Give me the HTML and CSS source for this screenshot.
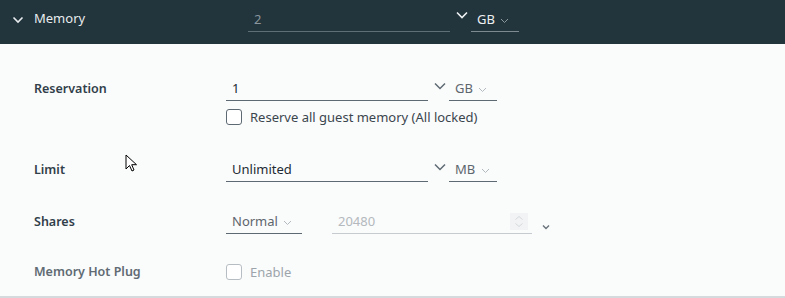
FILE: index.html
```html
<!DOCTYPE html>
<html lang="en">
<head>
  <meta charset="UTF-8">
  <meta name="viewport" content="width=device-width, initial-scale=1.0">
  <link rel="stylesheet" href="styles.css">
</head>
<body>
  <div class="panel">
    <div class="header">
      <svg class="toggle" width="12" height="8" viewBox="0 0 12 8"><path d="M1.5 1.5 L6 6 L10.5 1.5" fill="none" stroke="#e8ecee" stroke-width="1.6"/></svg>
      <span class="title">Memory</span>
      <div class="field dark wide">2</div>
      <svg class="caret" width="12" height="8" viewBox="0 0 12 8"><path d="M1 1.5 L6 6.5 L11 1.5" fill="none" stroke="#eef1f2" stroke-width="1.6"/></svg>
      <div class="unit dark">GB <svg class="mini" width="9" height="6" viewBox="0 0 9 6"><path d="M1 1 L4.5 4.5 L8 1" fill="none" stroke="#8d989d" stroke-width="1"/></svg></div>
    </div>

    <div class="content">
      <div class="row r-res">
        <div class="label">Reservation</div>
        <div class="field wide">1</div>
        <svg class="caret" width="12" height="8" viewBox="0 0 12 8"><path d="M1 1.5 L6 6.5 L11 1.5" fill="none" stroke="#5e6a73" stroke-width="1.5"/></svg>
        <div class="unit">GB <svg class="mini" width="9" height="6" viewBox="0 0 9 6"><path d="M1 1 L4.5 4.5 L8 1" fill="none" stroke="#b3babf" stroke-width="1"/></svg></div>
      </div>
      <div class="row r-check">
        <div class="label"></div>
        <label class="check"><span class="box"></span>Reserve all guest memory (All locked)</label>
      </div>

      <div class="row r-limit">
        <div class="label">Limit</div>
        <div class="field wide">Unlimited</div>
        <svg class="caret" width="12" height="8" viewBox="0 0 12 8"><path d="M1 1.5 L6 6.5 L11 1.5" fill="none" stroke="#5e6a73" stroke-width="1.5"/></svg>
        <div class="unit">MB <svg class="mini" width="9" height="6" viewBox="0 0 9 6"><path d="M1 1 L4.5 4.5 L8 1" fill="none" stroke="#b3babf" stroke-width="1"/></svg></div>
      </div>

      <div class="row r-shares">
        <div class="label">Shares</div>
        <div class="unit sel">Normal <svg class="mini" width="9" height="6" viewBox="0 0 9 6"><path d="M1 1 L4.5 4.5 L8 1" fill="none" stroke="#b3babf" stroke-width="1"/></svg></div>
        <div class="field num">
          <span>20480</span>
          <span class="spin">
            <svg width="18" height="17" viewBox="0 0 18 17"><path d="M5.5 6.5 L9 3.5 L12.5 6.5 M5.5 10.5 L9 13.5 L12.5 10.5" fill="none" stroke="#d6dadd" stroke-width="1"/></svg>
          </span>
        </div>
        <svg class="small-caret" width="8" height="6" viewBox="0 0 8 6"><path d="M1 1.5 L4 4.5 L7 1.5" fill="none" stroke="#6a737b" stroke-width="1.4"/></svg>
      </div>

      <div class="row r-plug">
        <div class="label muted">Memory Hot Plug</div>
        <label class="check off"><span class="box"></span>Enable</label>
      </div>
    </div>

    <svg class="cursor" width="14" height="20" viewBox="0 0 14 20"><path d="M1 1 L1 15 L4.5 11.5 L7 17 L9 16 L6.7 10.7 L11.5 10.7 Z" fill="#fff" stroke="#000" stroke-width="1"/></svg>
  </div>
</body>
</html>
```

FILE: styles.css
```css
body {
  margin: 0;
  font-family: "Noto Sans", "Open Sans", sans-serif;
  background: #fafbfb;
}

.panel {
  position: relative;
  width: 785px;
  height: 298px;
  background: #fafbfb;
}

.header {
  height: 44px;
  background: #22343c;
  display: flex;
  align-items: center;
  color: #e8ecee;
}

.toggle {
  margin-left: 12px;
  margin-right: 10px;
  margin-top: -4px;
}

.title {
  font-size: 13px;
  width: 214px;
  margin-top: -8px;
}

.field {
  height: 24px;
  box-sizing: border-box;
  border-bottom: 1px solid #5e6a73;
  font-size: 13px;
  color: #1d2b33;
  padding-left: 6px;
  line-height: 22px;
}

.wide {
  width: 202px;
}

.field.dark {
  color: #8a969c;
  border-bottom-color: #5f6f76;
  margin-top: -4px;
}

.caret {
  margin-left: 6px;
  margin-right: 3px;
  align-self: flex-start;
  margin-top: 5px;
}

.header .caret {
  margin-top: 11px;
}

.unit {
  width: 48px;
  height: 24px;
  box-sizing: border-box;
  border-bottom: 1px solid #5e6a73;
  font-size: 13px;
  color: #5d666d;
  padding-left: 6px;
  line-height: 22px;
}

.unit.dark {
  color: #eef1f2;
  border-bottom-color: #7d8b91;
  margin-top: -4px;
}

.mini {
  margin-left: 2px;
  vertical-align: middle;
}

.content {
  padding: 33px 0 0 34px;
  height: 219px;
  border-bottom: 2px solid #d5dadd;
}

.row {
  display: flex;
  align-items: flex-start;
}

.label {
  width: 192px;
  font-size: 12.5px;
  font-weight: 600;
  color: #313f4a;
  line-height: 24px;
}

.label.muted {
  color: #606b73;
}

.r-check {
  margin-top: 8px;
}

.r-limit {
  margin-top: 33px;
}

.r-shares {
  margin-top: 28px;
}

.r-plug {
  margin-top: 30px;
}

.r-plug .label {
  line-height: 16px;
}

.check {
  display: flex;
  align-items: center;
  font-size: 13px;
  color: #3a464e;
  height: 16px;
}

.box {
  width: 14px;
  height: 14px;
  border: 1px solid #5e6a73;
  border-radius: 3px;
  margin-right: 8px;
  background: #fff;
}

.check.off {
  color: #9da5ab;
}

.check.off .box {
  border-color: #b7bec3;
}

.sel {
  width: 76px;
}

.num {
  width: 200px;
  margin-left: 30px;
  color: #b3b9bd;
  border-bottom-color: #c5cbcf;
  display: flex;
  justify-content: space-between;
}

.spin {
  width: 18px;
  height: 17px;
  background: #f1f3f4;
  margin-top: 3px;
  margin-right: 4px;
  display: flex;
}

.small-caret {
  margin-left: 10px;
  margin-top: 14px;
}

.cursor {
  position: absolute;
  left: 125px;
  top: 154px;
}
```
